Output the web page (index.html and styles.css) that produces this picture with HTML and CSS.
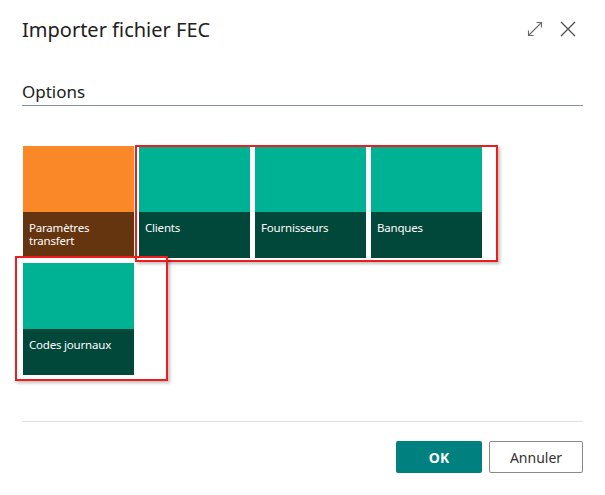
FILE: index.html
```html
<!DOCTYPE html>
<html lang="fr">
<head>
  <meta charset="UTF-8">
  <title>Importer fichier FEC</title>
  <link rel="stylesheet" href="styles.css">
</head>
<body>

  <div class="dialog">

    <div class="header">
      <h1 class="title">Importer fichier FEC</h1>
      <div class="header-icons">
        <svg class="icon" width="16" height="16" viewBox="0 0 16 16">
          <path d="M1.5 14.5 L14.5 1.5 M9.5 1.5 H14.5 V6.5 M1.5 9.5 V14.5 H6.5" fill="none" stroke="#6b6b6b" stroke-width="1.1"/>
        </svg>
        <svg class="icon" width="16" height="16" viewBox="0 0 16 16">
          <path d="M1 1 L15 15 M15 1 L1 15" fill="none" stroke="#505050" stroke-width="1.3"/>
        </svg>
      </div>
    </div>

    <div class="section-title">Options</div>

    <div class="tiles-wrap">
      <div class="tiles">
        <div class="tile tile-orange">
          <div class="tile-top"></div>
          <div class="tile-label">Paramètres transfert</div>
        </div>
        <div class="tile">
          <div class="tile-top"></div>
          <div class="tile-label">Clients</div>
        </div>
        <div class="tile">
          <div class="tile-top"></div>
          <div class="tile-label">Fournisseurs</div>
        </div>
        <div class="tile">
          <div class="tile-top"></div>
          <div class="tile-label">Banques</div>
        </div>
        <div class="tile">
          <div class="tile-top"></div>
          <div class="tile-label">Codes journaux</div>
        </div>
      </div>

      <!-- annotation boxes drawn over the tiles -->
      <div class="mark mark-row"></div>
      <div class="mark mark-single"></div>
    </div>

    <div class="footer">
      <button class="btn btn-ok">OK</button>
      <button class="btn btn-cancel">Annuler</button>
    </div>

  </div>

</body>
</html>
```

FILE: styles.css
```css
body {
  margin: 0;
  background: #ffffff;
  font-family: "Noto Sans", "Open Sans", sans-serif;
  color: #212121;
}

.dialog {
  width: 561px;
  padding: 0 22px;
}

.header {
  height: 58px;
  display: flex;
  align-items: center;
  justify-content: space-between;
}

.title {
  margin: 0;
  font-size: 20px;
  font-weight: normal;
}

.header-icons {
  display: flex;
  gap: 17px;
  padding-right: 7px;
}

.icon {
  display: block;
}

.section-title {
  margin-top: 23px;
  font-size: 17px;
  line-height: 22px;
  padding-bottom: 2px;
  border-bottom: 1.5px solid #8a919e;
}

.tiles-wrap {
  position: relative;
  margin-top: 40px;
  height: 275px;
}

.tiles {
  display: grid;
  grid-template-columns: repeat(4, 111px);
  grid-auto-rows: 112px;
  column-gap: 5px;
  row-gap: 5px;
  padding-left: 1px;
}

.tile {
  display: flex;
  flex-direction: column;
}

.tile-top {
  height: 66px;
  background-color: #00b294;
}

.tile-label {
  flex: 1;
  background-color: #01473a;
  color: #ffffff;
  font-size: 11.5px;
  line-height: 13px;
  padding: 9px 6px 0;
  letter-spacing: -0.2px;
}

.tile-orange .tile-top {
  background-color: #fa8829;
}

.tile-orange .tile-label {
  background-color: #653510;
}

.mark {
  position: absolute;
  border: 2px solid #ee1c1c;
  box-shadow: 2px 2px 3px rgba(0, 0, 0, 0.25);
}

.mark-row {
  left: 113px;
  top: -1px;
  width: 359px;
  height: 113px;
}

.mark-single {
  left: -7px;
  top: 110px;
  width: 149px;
  height: 121px;
}

.footer {
  border-top: 1px solid #e1e1e1;
  display: flex;
  justify-content: flex-end;
  gap: 7px;
  padding-top: 19px;
}

.btn {
  height: 32px;
  font-family: "Noto Sans", "Open Sans", sans-serif;
  font-size: 14px;
  border-radius: 2px;
  cursor: pointer;
}

.btn-ok {
  width: 86px;
  background-color: #00807f;
  color: #ffffff;
  border: none;
  font-weight: bold;
}

.btn-cancel {
  width: 94px;
  background-color: #ffffff;
  color: #323130;
  border: 1px solid #8a8886;
}
```
